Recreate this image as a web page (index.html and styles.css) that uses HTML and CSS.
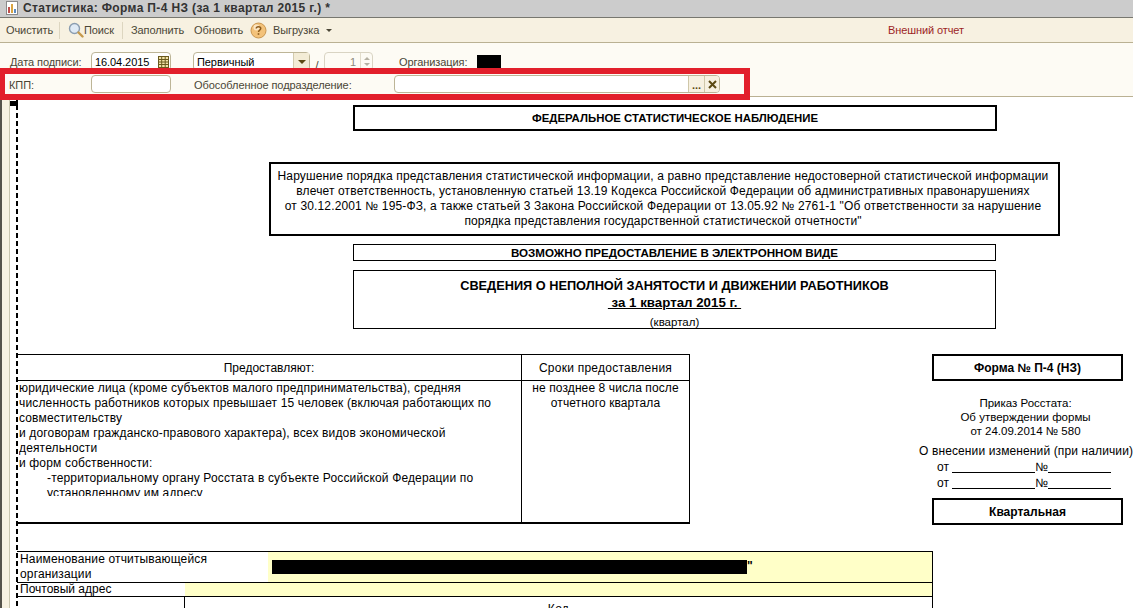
FILE: index.html
```html
<!DOCTYPE html>
<html lang="ru">
<head>
  <meta charset="UTF-8">
  <title>Статистика: Форма П-4 НЗ</title>
  <link rel="stylesheet" href="styles.css">
</head>
<body>

  <div class="window">
    <div class="title-bar">
      <svg class="title-icon" width="14" height="14" viewBox="0 0 14 14">
        <rect x="1.5" y="0.5" width="11" height="13" fill="#fff" stroke="#8a8a8a"/>
        <rect x="3" y="6" width="2" height="6" fill="#c0504d"/>
        <rect x="6" y="3" width="2" height="9" fill="#d9a441"/>
        <rect x="9" y="8" width="2" height="4" fill="#5b8bc0"/>
      </svg>
      <span>Статистика: Форма П-4 НЗ (за 1 квартал 2015 г.) *</span>
    </div>

    <div class="toolbar">
      <span class="tool tool-clear">Очистить</span>
      <span class="tool-sep"></span>
      <svg class="tool-icon" width="16" height="16" viewBox="0 0 16 16">
        <circle cx="6.5" cy="6.5" r="5" fill="#dfeaf5" stroke="#8b9db0" stroke-width="1.4"/>
        <line x1="10.5" y1="10.5" x2="14.5" y2="14.5" stroke="#c69a4c" stroke-width="2.4" stroke-linecap="round"/>
      </svg>
      <span class="tool tool-search">Поиск</span>
      <span class="tool-sep"></span>
      <span class="tool tool-fill">Заполнить</span>
      <span class="tool tool-refresh">Обновить</span>
      <svg class="help-icon" width="17" height="17" viewBox="0 0 17 17">
        <circle cx="8.5" cy="8.5" r="7.5" fill="#f3c27a" stroke="#c9964f"/>
        <circle cx="6.5" cy="5.5" r="3" fill="#fbe6c4"/>
        <path d="M6.2 6.6 C6.2 4.2 10.8 4.2 10.8 6.6 C10.8 8.2 8.5 8.2 8.5 10" fill="none" stroke="#8a5a1c" stroke-width="1.4"/>
        <rect x="7.7" y="11.2" width="1.6" height="1.6" fill="#8a5a1c"/>
      </svg>
      <span class="tool tool-export">Выгрузка</span>
      <span class="caret"></span>
      <span class="external">Внешний отчет</span>
    </div>

    <div class="form">
      <div class="form-row form-row-top">
        <label class="label label-date">Дата подписи:</label>
        <div class="field field-date">
          <span class="field-value">16.04.2015</span>
          <svg class="cal-icon" width="11" height="12" viewBox="0 0 11 12">
            <rect x="0.5" y="0.5" width="10" height="11" fill="#f3e3a8" stroke="#6b5a1e"/>
            <path d="M0.5 3.5H10.5M0.5 6H10.5M0.5 8.5H10.5M3.7 0.5V11.5M7.2 0.5V11.5" stroke="#6b5a1e" fill="none"/>
          </svg>
        </div>
        <div class="field field-type">
          <span class="field-value">Первичный</span>
          <span class="drop-btn"><span class="drop-arrow"></span></span>
        </div>
        <span class="slash">/</span>
        <div class="field field-num">
          <span class="num-value">1</span>
          <span class="spin"><span class="spin-up"></span><span class="spin-down"></span></span>
        </div>
        <label class="label label-org">Организация:</label>
        <span class="redacted-org"></span>
      </div>
      <div class="form-row form-row-bottom">
        <label class="label label-kpp">КПП:</label>
        <div class="field field-kpp"></div>
        <label class="label label-unit">Обособленное подразделение:</label>
        <div class="field field-unit">
          <span class="pick-btn">...</span>
          <span class="clear-btn">
            <svg width="9" height="9" viewBox="0 0 9 9"><path d="M1 1L8 8M8 1L1 8" stroke="#5c4a14" stroke-width="2"/></svg>
          </span>
        </div>
      </div>
      <div class="highlight"></div>
    </div>

    <div class="sheet-wrap">
      <div class="strip"></div>
      <div class="doc">
        <div class="page-line"></div>
        <div class="page-mark"></div>

        <div class="box box-federal">ФЕДЕРАЛЬНОЕ СТАТИСТИЧЕСКОЕ НАБЛЮДЕНИЕ</div>

        <div class="box box-notice">
          Нарушение порядка представления статистической информации, а равно представление недостоверной статистической информации<br>
          влечет ответственность, установленную статьей 13.19 Кодекса Российской Федерации об административных правонарушениях<br>
          от 30.12.2001 № 195-ФЗ, а также статьей 3 Закона Российской Федерации от 13.05.92 № 2761-1 "Об ответственности за нарушение<br>
          порядка представления государственной статистической отчетности"
        </div>

        <div class="box box-electronic">ВОЗМОЖНО ПРЕДОСТАВЛЕНИЕ В ЭЛЕКТРОННОМ ВИДЕ</div>

        <div class="box box-heading">
          <div class="heading-main">СВЕДЕНИЯ О НЕПОЛНОЙ ЗАНЯТОСТИ И ДВИЖЕНИИ РАБОТНИКОВ</div>
          <div class="heading-period">&nbsp;за 1 квартал 2015 г.&nbsp;</div>
          <div class="heading-note">(квартал)</div>
        </div>

        <div class="middle">
          <div class="who-table">
            <div class="who-head">
              <div class="who-col1">Предоставляют:</div>
              <div class="who-col2 who-term-head">Сроки предоставления</div>
            </div>
            <div class="who-body">
              <div class="who-col1 who-text">
                <div class="who-clip">
                  юридические лица (кроме субъектов малого предпринимательства), средняя<br>
                  численность работников которых превышает 15 человек (включая работающих по<br>
                  совместительству<br>
                  и договорам гражданско-правового характера), всех видов экономической<br>
                  деятельности<br>
                  и форм собственности:<br>
                  <div class="who-indent">-территориальному органу Росстата в субъекте Российской Федерации по<br>установленному им адресу</div>
                </div>
              </div>
              <div class="who-col2 who-term">не позднее 8 числа после<br>отчетного квартала</div>
            </div>
          </div>

          <div class="form-info">
            <div class="box box-form">Форма № П-4 (НЗ)</div>
            <div class="order">Приказ Росстата:<br>Об утверждении формы<br>от 24.09.2014 № 580</div>
            <div class="changes">О внесении изменений (при наличии)</div>
            <div class="change-line">от <span class="blank blank-long"></span>№<span class="blank blank-short"></span></div>
            <div class="change-line">от <span class="blank blank-long"></span>№<span class="blank blank-short"></span></div>
            <div class="box box-period">Квартальная</div>
          </div>
        </div>

        <div class="org-table">
          <div class="org-row org-row-name">
            <div class="org-label">Наименование отчитывающейся<br>организации</div>
            <div class="org-value"><span class="redacted-name"></span><span class="quote">"</span></div>
          </div>
          <div class="org-row org-row-addr">
            <div class="addr-label">Почтовый адрес</div>
            <div class="addr-value"></div>
          </div>
          <div class="org-row org-row-code">
            <div class="code-left"></div>
            <div class="code-right">Код</div>
          </div>
        </div>
      </div>
    </div>
  </div>

</body>
</html>
```

FILE: styles.css
```css
* {
  box-sizing: border-box;
}

html, body {
  margin: 0;
  height: 100%;
  overflow: hidden;
}

body {
  font-family: "Liberation Sans", Arial, sans-serif;
  font-size: 12px;
  color: #000;
  background: #fff;
}

.window {
  height: 608px;
  display: flex;
  flex-direction: column;
  overflow: hidden;
}

/* title */
.title-bar {
  height: 18px;
  flex: none;
  display: flex;
  align-items: center;
  padding: 0 0 1px 5px;
  gap: 4px;
  background: #cccccc;
  border-bottom: 1px solid #77776f;
  color: #333;
  font-weight: bold;
  letter-spacing: 0.36px;
}

/* toolbar */
.toolbar {
  height: 25px;
  flex: none;
  display: flex;
  align-items: center;
  background: #f7f1e1;
  border-bottom: 1px solid #bab193;
  color: #4a4636;
  padding-left: 6px;
  font-size: 11px;
  letter-spacing: -0.1px;
}

.tool-clear {
  width: 47px;
}

.tool-sep {
  width: 1px;
  height: 17px;
  background: #ddd6c0;
  margin-left: 6px;
  margin-right: 8px;
}

.tool-search {
  width: 32px;
}

.tool-fill {
  width: 54px;
  margin-right: 9px;
}

.tool-refresh {
  width: 48px;
}

.help-icon {
  margin-left: 8px;
  margin-right: 6px;
}

.tool-export {
  width: 49px;
}

.caret {
  width: 0;
  height: 0;
  margin-left: 4px;
  border-left: 3px solid transparent;
  border-right: 3px solid transparent;
  border-top: 3px solid #4a4636;
}

.external {
  margin-left: 556px;
  color: #9c1f1f;
}

/* form */
.form {
  height: 54px;
  flex: none;
  position: relative;
  background: #fdfbf4;
  border-bottom: 1px solid #bab193;
  color: #4a4636;
  font-size: 11px;
  letter-spacing: -0.08px;
}

.form-row {
  display: flex;
  align-items: center;
  position: absolute;
  left: 0;
  right: 0;
}

.form-row-top {
  top: 9px;
  height: 19px;
}

.form-row-bottom {
  top: 32px;
  height: 18px;
}

.label {
  flex: none;
}

.label-date {
  margin-left: 10px;
  width: 81px;
  padding-top: 1px;
}

.label-kpp {
  margin-left: 9px;
  width: 82px;
  padding-top: 1px;
}

.label-unit {
  margin-left: 23px;
  width: 200px;
  padding-top: 1px;
}

.label-org {
  margin-left: 26px;
  width: 78px;
  padding-top: 1px;
}

.field {
  flex: none;
  height: 100%;
  display: flex;
  align-items: center;
  background: #fff;
  border: 1px solid #bdb597;
  border-radius: 4px;
  color: #000;
}

.field-value {
  padding-left: 3px;
  flex: 1;
}

.field-date {
  width: 80px;
}

.cal-icon {
  margin-right: 1px;
}

.field-type {
  width: 117px;
  margin-left: 22px;
  padding-right: 0;
}

.drop-btn {
  width: 16px;
  height: 100%;
  background: #f3ecd6;
  border-left: 1px solid #d3cbae;
  display: flex;
  align-items: center;
  justify-content: center;
}

.drop-arrow {
  width: 0;
  height: 0;
  border-left: 4px solid transparent;
  border-right: 4px solid transparent;
  border-top: 4px solid #5c4a14;
}

.slash {
  width: 14px;
  text-align: center;
  padding-top: 6px;
}

.field-num {
  width: 49px;
  background: #fdfbf4;
  border-color: #d9d4c3;
  color: #8d8a7c;
}

.num-value {
  flex: 1;
  text-align: right;
  padding-right: 4px;
}

.spin {
  width: 12px;
  height: 100%;
  display: flex;
  flex-direction: column;
  align-items: center;
  justify-content: center;
  gap: 3px;
  border-left: 1px solid #e2ddcc;
}

.spin-up {
  border-left: 3px solid transparent;
  border-right: 3px solid transparent;
  border-bottom: 3px solid #b5b1a3;
}

.spin-down {
  border-left: 3px solid transparent;
  border-right: 3px solid transparent;
  border-top: 3px solid #b5b1a3;
}

.redacted-org {
  width: 24px;
  height: 13px;
  background: #000;
}

.field-kpp {
  width: 80px;
}

.field-unit {
  width: 326px;
  justify-content: flex-end;
}

.pick-btn, .clear-btn {
  width: 16px;
  height: 100%;
  display: flex;
  justify-content: center;
  background: #f7f1e1;
  border-left: 1px solid #cfc7a9;
  color: #5c4a14;
  font-weight: bold;
  line-height: 19px;
}

.clear-btn {
  width: 15px;
  align-items: center;
  border-radius: 0 3px 3px 0;
}

.highlight {
  position: absolute;
  z-index: 1;
  left: 0;
  top: 25px;
  width: 750px;
  height: 32px;
  border: 6px solid #e21f2b;
  border-left-width: 5px;
}

/* sheet */
.sheet-wrap {
  flex: 1;
  display: flex;
  min-height: 0;
}

.strip {
  flex: none;
  width: 10px;
  background: #f7f1e1;
  border-left: 2px solid #55524a;
  border-right: 1px solid #c9c5ae;
}

.doc {
  flex: 1;
  position: relative;
  background: #fff;
  overflow: hidden;
}

.page-line {
  position: absolute;
  left: 6px;
  top: 0;
  bottom: 0;
  width: 2px;
  background: repeating-linear-gradient(to bottom, #000 0, #000 5px, transparent 5px, transparent 8px);
}

.page-mark {
  position: absolute;
  left: 0;
  top: 4px;
  width: 8px;
  height: 5px;
  background: #000;
}

.box {
  display: flex;
  align-items: center;
  justify-content: center;
  text-align: center;
  background: #fff;
}

.box-federal {
  margin: 8px 0 0 343px;
  width: 644px;
  height: 26px;
  border: 2px solid #000;
  font-size: 11.4px;
  font-weight: bold;
}

.box-notice {
  display: block;
  margin: 31px 0 0 259px;
  width: 791px;
  height: 74px;
  padding: 5px 3px 0 0;
  border: 2px solid #000;
  line-height: 15px;
  letter-spacing: 0.14px;
}

.box-electronic {
  margin: 8px 0 0 343px;
  width: 643px;
  height: 17px;
  border: 1px solid #000;
  font-size: 11.6px;
  font-weight: bold;
}

.box-heading {
  display: block;
  margin: 9px 0 0 343px;
  width: 643px;
  height: 59px;
  padding-top: 7px;
  border: 1px solid #000;
}

.heading-main {
  font-size: 12.75px;
  font-weight: bold;
  line-height: 16px;
}

.heading-period {
  font-size: 13.3px;
  font-weight: bold;
  line-height: 18px;
  text-decoration: underline;
}

.heading-note {
  font-size: 11.5px;
  line-height: 15px;
  margin-top: 3px;
}

.middle {
  display: flex;
  margin: 25px 0 0 7px;
}

.who-table {
  width: 673px;
  height: 170px;
  flex: none;
  border: 1px solid #000;
  border-left: none;
  border-bottom-width: 2px;
}

.who-head {
  display: flex;
  height: 26px;
  line-height: 26px;
  text-align: center;
  border-bottom: 1px solid #000;
}

.who-body {
  display: flex;
  height: 141px;
}

.who-col1 {
  width: 505px;
  flex: none;
  border-right: 1px solid #000;
}

.who-col2 {
  flex: 1;
}

.who-term-head {
  letter-spacing: 0.25px;
}

.who-text {
  padding-left: 2px;
  line-height: 15px;
  letter-spacing: 0.15px;
}

.who-clip {
  height: 115px;
  overflow: hidden;
  white-space: nowrap;
}

.who-indent {
  padding-left: 28px;
}

.who-term {
  text-align: center;
  line-height: 15px;
  letter-spacing: 0.1px;
}

.form-info {
  width: 191px;
  margin-left: 242px;
  flex: none;
  text-align: center;
}

.box-form, .box-period {
  width: 191px;
  height: 27px;
  border: 2px solid #000;
  font-weight: bold;
}

.order {
  margin-top: 15px;
  padding-right: 4px;
  line-height: 14px;
  font-size: 11.5px;
}

.changes {
  margin: 6px 0 0 -13px;
  width: 225px;
  line-height: 15px;
  white-space: nowrap;
  text-align: left;
  letter-spacing: 0.12px;
}

.change-line {
  line-height: 16px;
  white-space: nowrap;
  padding-left: 5px;
  text-align: left;
}

.blank {
  display: inline-block;
  border-bottom: 1px solid #000;
  height: 11px;
  vertical-align: -2px;
}

.blank-long {
  width: 83px;
}

.blank-short {
  width: 63px;
}

.box-period {
  margin-top: 7px;
}

.org-table {
  margin: 26px 0 0 7px;
  width: 916px;
  border: 1px solid #000;
  border-left: none;
  border-bottom: none;
}

.org-row {
  display: flex;
  border-bottom: 1px solid #000;
}

.org-row-name {
  height: 31px;
}

.org-label {
  width: 251px;
  flex: none;
  padding-left: 3px;
  line-height: 15px;
  letter-spacing: 0.15px;
}

.org-value {
  flex: 1;
  background: #ffffc8;
  padding: 8px 0 0 4px;
  display: flex;
  align-items: flex-start;
}

.redacted-name {
  width: 475px;
  height: 14px;
  background: #000;
}

.quote {
  font-weight: bold;
  line-height: 12px;
}

.org-row-addr {
  height: 14px;
}

.addr-label {
  width: 168px;
  flex: none;
  padding-left: 3px;
  line-height: 13px;
}

.addr-value {
  flex: 1;
  background: #ffffc8;
}

.org-row-code {
  height: 30px;
}

.code-left {
  width: 168px;
  flex: none;
  border-right: 1px solid #000;
}

.code-right {
  flex: 1;
  text-align: center;
  padding-top: 5px;
  letter-spacing: 0.3px;
}
```
